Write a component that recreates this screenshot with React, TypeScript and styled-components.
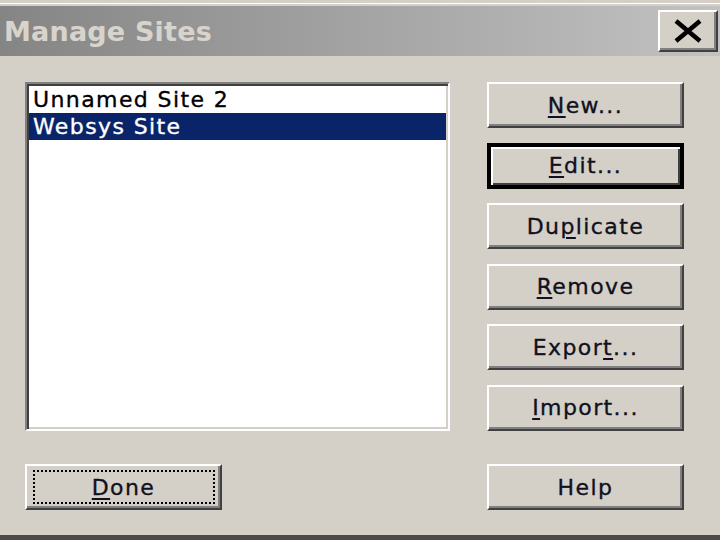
import styled, { createGlobalStyle } from 'styled-components';

const GlobalStyle = createGlobalStyle`
  html, body {
    margin: 0;
    padding: 0;
    background: #d4d0c8;
  }

  body {
    font-family: 'DejaVu Sans', Verdana, sans-serif;
  }
`;

const Window = styled.div`
  box-sizing: border-box;
  width: 720px;
  height: 540px;
  padding-top: 6px;
  display: flex;
  flex-direction: column;
  background: linear-gradient(#d4d0c8 0 3px, #ffffff 3px 4px, #d4d0c8 4px);
  border-bottom: 5px solid #4a4a4a;
  overflow: hidden;
`;

const TitleBar = styled.div`
  box-sizing: border-box;
  height: 50px;
  padding: 0 2px 0 4px;
  display: flex;
  align-items: center;
  justify-content: space-between;
  background: linear-gradient(to right, #858585, #c2c2c2);
`;

const Title = styled.span`
  font-size: 27px;
  font-weight: bold;
  color: #d8d4cc;
  text-shadow: 0 0 1px #9a9a9a;
  letter-spacing: 0.2px;
`;

const CloseButton = styled.button`
  box-sizing: border-box;
  width: 60px;
  height: 42px;
  padding: 0;
  display: flex;
  align-items: center;
  justify-content: center;
  background: #d4d0c8;
  border: 2px solid;
  border-color: #ffffff #404040 #404040 #ffffff;
  box-shadow: inset -2px -2px #808080;
`;

const Body = styled.div`
  flex: 1;
  padding: 26px 0 0 25px;
  display: grid;
  grid-template-columns: 425px 197px;
  grid-template-rows: 349px 46px;
  column-gap: 37px;
  row-gap: 33px;
`;

const ListBox = styled.ul`
  box-sizing: border-box;
  margin: 0;
  list-style: none;
  background: #ffffff;
  border: 2px solid;
  border-color: #808080 #ffffff #ffffff #808080;
  box-shadow: inset 2px 2px #404040, inset -2px -2px #d4d0c8;
  padding: 2px;
  overflow: hidden;
`;

const ListItem = styled.li<{ $selected?: boolean }>`
  height: 27px;
  line-height: 27px;
  padding-left: 4px;
  font-size: 22px;
  letter-spacing: 1.4px;
  white-space: nowrap;
  -webkit-text-stroke: 0.35px currentColor;
  color: ${(p) => (p.$selected ? '#ffffff' : '#000000')};
  background: ${(p) => (p.$selected ? '#0a246a' : 'transparent')};
`;

const ButtonColumn = styled.div`
  display: flex;
  flex-direction: column;
  justify-content: space-between;
`;

const Button = styled.button<{ $default?: boolean; $focused?: boolean }>`
  position: relative;
  box-sizing: border-box;
  width: 197px;
  height: 46px;
  padding: 0;
  font-family: 'DejaVu Sans', Verdana, sans-serif;
  font-size: 22px;
  letter-spacing: 1.4px;
  -webkit-text-stroke: 0.35px currentColor;
  color: #101020;
  background: #d4d0c8;
  border: 2px solid;
  border-color: #ffffff #404040 #404040 #ffffff;
  box-shadow: inset -2px -2px #808080;

  ${(p) =>
    p.$default &&
    `
    border-width: 4px;
    border-color: #000000;
    box-shadow: inset 2px 2px #ffffff, inset -2px -2px #404040;
  `}

  &::after {
    content: '';
    display: ${(p) => (p.$focused ? 'block' : 'none')};
    position: absolute;
    inset: 4px 5px 4px 6px;
    border: 2px dotted #000000;
  }
`;

const Key = styled.span`
  text-decoration: underline;
  text-decoration-thickness: 2px;
  text-underline-offset: 3px;
`;

function CloseIcon() {
  return (
    <svg width="30" height="24" viewBox="0 0 30 24" role="presentation">
      <path d="M3 2 L27 22 M27 2 L3 22" stroke="#000" strokeWidth="4.5" />
    </svg>
  );
}

export default function App() {
  return (
    <>
      <GlobalStyle />
      <Window>
        <TitleBar>
          <Title>Manage Sites</Title>
          <CloseButton aria-label="Close">
            <CloseIcon />
          </CloseButton>
        </TitleBar>
        <Body>
          <ListBox>
            <ListItem>Unnamed Site 2</ListItem>
            <ListItem $selected>Websys Site</ListItem>
          </ListBox>
          <ButtonColumn>
            <Button>
              <Key>N</Key>ew...
            </Button>
            <Button $default>
              <Key>E</Key>dit...
            </Button>
            <Button>
              Du<Key>p</Key>licate
            </Button>
            <Button>
              <Key>R</Key>emove
            </Button>
            <Button>
              Expor<Key>t</Key>...
            </Button>
            <Button>
              <Key>I</Key>mport...
            </Button>
          </ButtonColumn>
          <Button $focused>
            <Key>D</Key>one
          </Button>
          <Button>Help</Button>
        </Body>
      </Window>
    </>
  );
}
